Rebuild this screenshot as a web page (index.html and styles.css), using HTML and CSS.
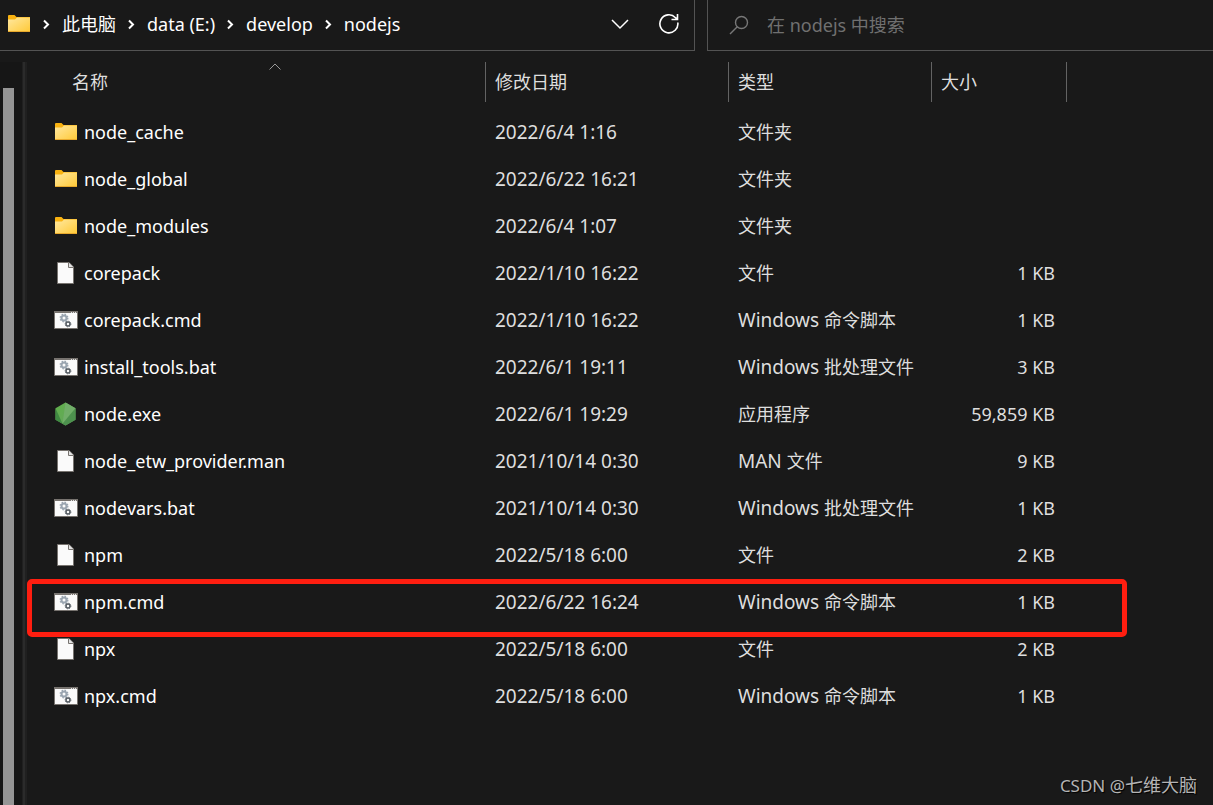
FILE: index.html
```html
<!DOCTYPE html>
<html lang="zh-CN">
<head>
<meta charset="utf-8">
<title>nodejs</title>
<link rel="stylesheet" href="styles.css">
</head>
<body>
<svg class="sprite" aria-hidden="true">
  <defs>
    <linearGradient id="folderFill" x1="0" y1="0" x2="1" y2="1"><stop offset="0" stop-color="#ffe8a0"/><stop offset="1" stop-color="#ffc936"/></linearGradient>
    <linearGradient id="hexFill" x1="0" y1="0" x2="1" y2="1"><stop offset="0" stop-color="#5fb04a"/><stop offset="1" stop-color="#66a45f"/></linearGradient>
  </defs>
  <symbol id="folder" viewBox="0 0 24 24">
    <path d="M1 4Q1 3 2 3H7.5L9.5 5H23V20H1Z" fill="#f9b210"/>
    <path d="M1 7.500H8L10 5.500H23V20H1Z" fill="url(#folderFill)"/>
    <path d="M1 19.5H23" stroke="#e8a92c"/>
  </symbol>
  <symbol id="file" viewBox="0 0 24 24">
    <path d="M3.500 1.500H15L19.500 6V22.500H3.500Z" fill="#fafafa" stroke="#77736f"/>
    <path d="M14.500 1.500V6.500H19.500" fill="#e4e4e4" stroke="#77736f"/>
  </symbol>
  <symbol id="script" viewBox="0 0 24 24">
    <path d="M.5 3.500H23.500V20.500H.5Z" fill="#fafafa" stroke="#77736f"/>
    <path d="M0 4H24" stroke="#77736f" stroke-width="2"/>
    <path d="M17 4.500h1M19 4.500h1M21 4.500h1" stroke="#e0e0e0"/>
    <circle cx="10" cy="10" r="2.500" fill="none" stroke="#9aa5b0" stroke-width="2"/>
    <circle cx="10" cy="10" r="3.800" fill="none" stroke="#9aa5b0" stroke-width="1.400" stroke-dasharray="1.500 1.500"/>
    <circle cx="14" cy="16" r="2" fill="none" stroke="#545b62" stroke-width="1.500"/>
    <circle cx="14" cy="16" r="2.900" fill="none" stroke="#545b62" stroke-width=".8" stroke-dasharray="1.200 1.100"/>
  </symbol>
  <symbol id="node" viewBox="0 0 24 24">
    <path d="M11.500 .5L21.500 6.300V17.700L11.500 23.500L1.500 17.700V6.300Z" fill="url(#hexFill)"/>
    <path d="M1.500 6.300L8.500 21.700L1.500 17.700Z" fill="#3f8a42"/>
    <path d="M11.500 .5L21.500 6.300L8.500 21.700Z" fill="#71ae69"/>
    <path d="M21.500 6.300V17.700L11.500 23.500L8.500 21.700Z" fill="#4d914e"/>
  </symbol>
  <symbol id="chevron" viewBox="0 0 7 12"><path d="M1 2.500L5 6.500L1 10.500" fill="none" stroke="#fff" stroke-width="2"/></symbol>
</svg>

<header class="topbar">
  <nav class="address" aria-label="路径">
    <svg class="icon"><use href="#folder"/></svg>
    <svg class="chevron"><use href="#chevron"/></svg>
    <a class="crumb" href="#">此电脑</a>
    <svg class="chevron"><use href="#chevron"/></svg>
    <a class="crumb" href="#">data (E:)</a>
    <svg class="chevron"><use href="#chevron"/></svg>
    <a class="crumb" href="#">develop</a>
    <svg class="chevron"><use href="#chevron"/></svg>
    <a class="crumb" href="#">nodejs</a>
    <span class="tools">
      <button class="tool" aria-label="历史"><svg width="20" height="20" viewBox="0 0 20 20"><path d="M2 6L10 14L18 6" fill="none" stroke="#fff" stroke-width="1.500"/></svg></button>
      <button class="tool" aria-label="刷新"><svg width="22" height="22" viewBox="0 0 22 22"><path d="M19.800 9.500A9 9 0 1 1 17.500 4.700L19.500 6.500M19.500 1V6.500H13.500" fill="none" stroke="#fff" stroke-width="1.600"/></svg></button>
    </span>
  </nav>
  <label class="search">
    <svg width="20" height="20" viewBox="0 0 20 20"><circle cx="12.500" cy="7.500" r="6" fill="none" stroke="#777" stroke-width="1.400"/><path d="M8.300 11.700L1 19" stroke="#777" stroke-width="1.400"/></svg>
    <input class="query" type="text" aria-label="搜索" placeholder="在 nodejs 中搜索">
  </label>
</header>

<main class="body">
  <div class="gutter"><div class="thumb"></div><div class="splitter"></div></div>
  <section class="listing">
    <table class="files">
      <colgroup><col class="c-name"><col class="c-date"><col class="c-type"><col class="c-size"><col></colgroup>
      <thead>
        <tr>
          <th class="first">名称<svg class="sort" width="12" height="7" viewBox="0 0 12 7"><path d="M.5 6.500L6 1L11.500 6.500" fill="none" stroke="#999"/></svg></th>
          <th>修改日期</th><th>类型</th><th>大小</th><td></td>
        </tr>
      </thead>
      <tbody>
        <tr><td><a class="name" href="#"><svg class="icon"><use href="#folder"/></svg>node_cache</a></td><td>2022/6/4 1:16</td><td><span class="cjk">文件夹</span></td><td></td><td></td></tr>
        <tr><td><a class="name" href="#"><svg class="icon"><use href="#folder"/></svg>node_global</a></td><td>2022/6/22 16:21</td><td><span class="cjk">文件夹</span></td><td></td><td></td></tr>
        <tr><td><a class="name" href="#"><svg class="icon"><use href="#folder"/></svg>node_modules</a></td><td>2022/6/4 1:07</td><td><span class="cjk">文件夹</span></td><td></td><td></td></tr>
        <tr><td><a class="name" href="#"><svg class="icon"><use href="#file"/></svg>corepack</a></td><td>2022/1/10 16:22</td><td><span class="cjk">文件</span></td><td class="size">1 KB</td><td></td></tr>
        <tr><td><a class="name" href="#"><svg class="icon"><use href="#script"/></svg>corepack.cmd</a></td><td>2022/1/10 16:22</td><td>Windows <span class="cjk">命令脚本</span></td><td class="size">1 KB</td><td></td></tr>
        <tr><td><a class="name" href="#"><svg class="icon"><use href="#script"/></svg>install_tools.bat</a></td><td>2022/6/1 19:11</td><td>Windows <span class="cjk">批处理文件</span></td><td class="size">3 KB</td><td></td></tr>
        <tr><td><a class="name" href="#"><svg class="icon"><use href="#node"/></svg>node.exe</a></td><td>2022/6/1 19:29</td><td><span class="cjk">应用程序</span></td><td class="size">59,859 KB</td><td></td></tr>
        <tr><td><a class="name" href="#"><svg class="icon"><use href="#file"/></svg>node_etw_provider.man</a></td><td>2021/10/14 0:30</td><td>MAN <span class="cjk">文件</span></td><td class="size">9 KB</td><td></td></tr>
        <tr><td><a class="name" href="#"><svg class="icon"><use href="#script"/></svg>nodevars.bat</a></td><td>2021/10/14 0:30</td><td>Windows <span class="cjk">批处理文件</span></td><td class="size">1 KB</td><td></td></tr>
        <tr><td><a class="name" href="#"><svg class="icon"><use href="#file"/></svg>npm</a></td><td>2022/5/18 6:00</td><td><span class="cjk">文件</span></td><td class="size">2 KB</td><td></td></tr>
        <tr class="marked"><td><a class="name" href="#"><svg class="icon"><use href="#script"/></svg>npm.cmd</a></td><td>2022/6/22 16:24</td><td>Windows <span class="cjk">命令脚本</span></td><td class="size">1 KB</td><td></td></tr>
        <tr><td><a class="name" href="#"><svg class="icon"><use href="#file"/></svg>npx</a></td><td>2022/5/18 6:00</td><td><span class="cjk">文件</span></td><td class="size">2 KB</td><td></td></tr>
        <tr><td><a class="name" href="#"><svg class="icon"><use href="#script"/></svg>npx.cmd</a></td><td>2022/5/18 6:00</td><td>Windows <span class="cjk">命令脚本</span></td><td class="size">1 KB</td><td></td></tr>
      </tbody>
    </table>
  </section>
</main>
<div class="watermark">CSDN @<span class="cjk">七维大脑</span></div>
</body>
</html>
```
FILE: styles.css
```css
*, *::before, *::after { box-sizing: border-box; }

body {
  margin: 0;
  min-height: 100vh;
  display: flex;
  flex-direction: column;
  background: #191919;
  color: #dedede;
  font: 19px/24px "Noto Sans", "Noto Sans CJK SC", sans-serif;
}

a { color: #fff; text-decoration: none; }
.sprite { position: absolute; width: 0; height: 0; }
.cjk { font-size: 18px; }
.icon { width: 24px; height: 24px; flex: none; }

.topbar { display: grid; grid-template-columns: 695fr 506fr; gap: 12px; }

.address {
  display: flex;
  align-items: center;
  gap: 12px;
  height: 51px;
  padding: 0 14px 2px 7px;
  border: solid #535353;
  border-width: 0 1px 1px 0;
  font-size: 18px;
}
.chevron { width: 7px; height: 12px; flex: none; }
.crumb { white-space: nowrap; }
.tools { display: flex; gap: 28px; margin-left: auto; }
.tool {
  display: flex;
  align-items: center;
  padding: 0;
  border: 0;
  background: none;
}

.search {
  display: flex;
  align-items: center;
  gap: 18px;
  padding-left: 21px;
  border: solid #535353;
  border-width: 0 0 1px 1px;
}
.query {
  flex: 1;
  min-width: 0;
  padding: 0;
  border: 0;
  outline: 0;
  background: none;
  color: #fff;
  font: inherit;
  font-size: 18px;
}
.query::placeholder { color: #707070; opacity: 1; }

.body { flex: 1; display: flex; padding-top: 11px; }

.gutter {
  flex: none;
  display: flex;
  justify-content: space-between;
  width: 27px;
  padding-left: 3px;
  background: #161616;
}
.thumb { width: 11px; margin-top: 26px; background: #959595; }
.splitter { width: 5px; background: #2b2b2b; border: solid #202020; border-width: 0 2px 0 1px; }

.listing { flex: 1; min-width: 0; }
.files { width: 100%; table-layout: fixed; border-collapse: separate; border-spacing: 0; }
.c-name { width: 458px; }
.c-date { width: 243px; }
.c-type { width: 203px; }
.c-size { width: 135px; }

.files th {
  height: 40px;
  padding: 0 0 0 9px;
  border-left: 1px solid #636363;
  font-size: 18px;
  font-weight: 400;
  text-align: left;
}
.files th.first { position: relative; padding-left: 45px; border-left: 0; }
.files thead td { padding: 0; border-left: 1px solid #636363; }
.sort { position: absolute; top: 1px; left: 242px; }

.files tbody::before { content: ""; display: block; height: 6px; }
.files tbody td { height: 47px; padding: 0 0 0 10px; white-space: nowrap; }
.files tbody td:first-child { padding-left: 27px; }
.files tbody td.size { padding: 0 11px 0 0; font-size: 18px; text-align: right; }
.name { display: flex; align-items: center; gap: 6px; font-size: 18px; }

.marked { position: relative; }
.marked::after {
  content: "";
  position: absolute;
  top: 1px;
  left: 0;
  width: 1100px;
  height: 58px;
  border: 5px solid #ff1e10;
  border-radius: 5px;
}

.watermark {
  position: absolute;
  right: 16px;
  bottom: 7px;
  color: #b4b4b4;
  font-size: 17px;
  text-shadow: 1px 1px 1px #000;
}
```
